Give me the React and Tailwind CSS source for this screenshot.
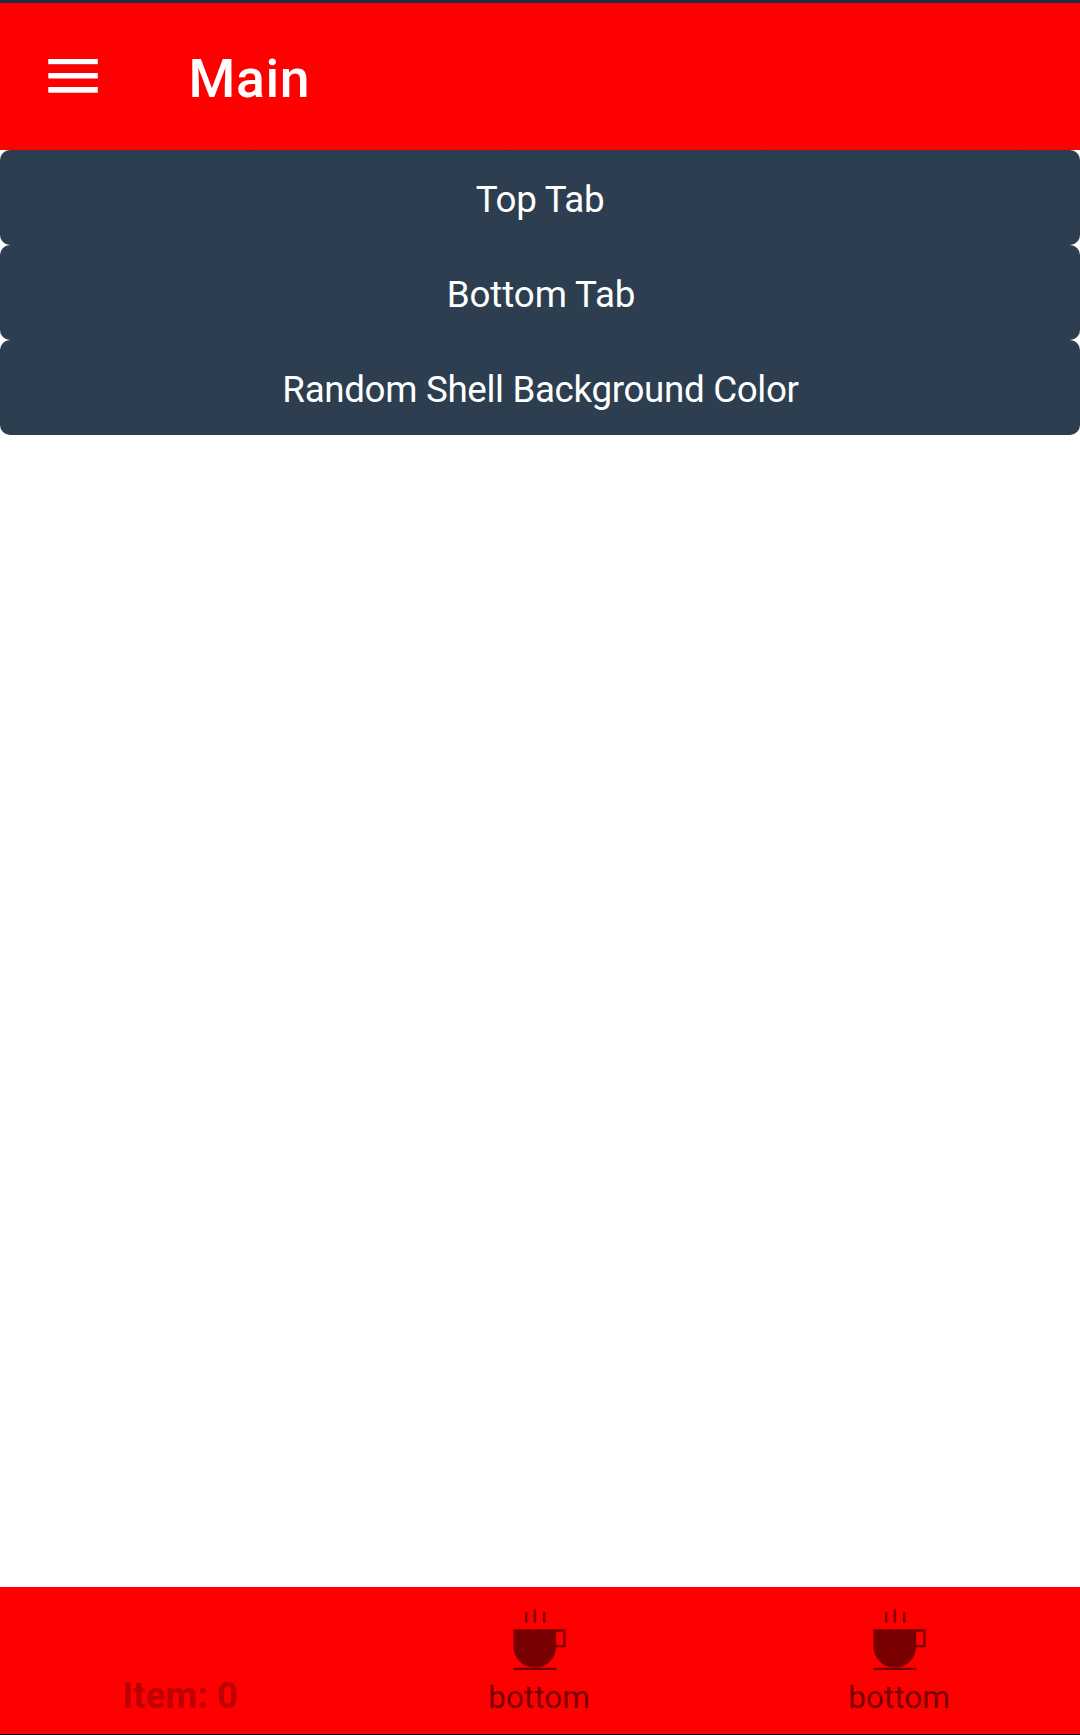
const buttons = [
  { label: "Top Tab", style: "tracking-[-0.3px]" },
  { label: "Bottom Tab", style: "pl-[2px] tracking-[-0.1px]" },
  { label: "Random Shell Background Color", style: "pl-px tracking-[-0.34px]" },
];

function MenuIcon() {
  return (
    <svg className="mb-[2px] block h-[34px] w-[50px]" viewBox="0 0 50 34" fill="#fff">
      <rect x="0.3" y="0" width="49.5" height="5.2" />
      <rect x="0.3" y="14" width="49.5" height="5.5" />
      <rect x="0.3" y="28" width="49.5" height="5.7" />
    </svg>
  );
}

function CupIcon() {
  return (
    <svg className="block h-[62px] w-[54px]" viewBox="0 0 54 62" fill="none" stroke="#780000">
      <path d="M13.2 3.3V13.8M31.2 3.3V13.8M22 0.2V13.8" strokeWidth="2.3" />
      <path d="M0.4 20.3H43.2V36.5C43.2 49 34 58.6 21.8 58.6S0.4 49 0.4 36.5Z" fill="#780000" stroke="none" />
      <path d="M42 21.5H51.4V37.2H42" strokeWidth="2.3" />
      <path d="M0.4 59.8H43.4" strokeWidth="2.3" />
    </svg>
  );
}

function BottomTab() {
  return (
    <div className="flex flex-1 flex-col items-center pt-[22px]">
      <CupIcon />
      <span className="mt-[8px] pr-[2px] text-[31.5px] leading-[37px] text-[#780000]">bottom</span>
    </div>
  );
}

export default function App() {
  return (
    <div className="flex h-[1735px] w-[1080px] flex-col overflow-hidden bg-white font-['Roboto',sans-serif]">
      <div className="h-[3px] shrink-0 bg-[#1f2f47]" />
      <header className="flex h-[147px] shrink-0 items-center bg-[#ff0000] pl-[48px]">
        <MenuIcon />
        <h1 className="mt-[5px] ml-[90.5px] text-[53.5px] leading-[62px] font-medium tracking-[0.7px] text-white">Main</h1>
      </header>
      <main className="flex flex-1 flex-col">
        {buttons.map(({ label, style }) => (
          <button
            key={label}
            className={`flex h-[95px] w-full items-center justify-center rounded-[10px] bg-[#2c3e50] pt-[4px] text-[36.75px] leading-[43px] text-white first:bg-linear-to-b first:from-[#2a3b4c] first:to-[#2c3e50] first:to-15% ${style}`}
          >
            {label}
          </button>
        ))}
      </main>
      <nav className="flex h-[147px] shrink-0 bg-[#ff0000]">
        <div className="flex flex-1 items-end justify-center pb-[17px]">
          <span className="text-[36.75px] leading-[43px] font-bold text-[#bf0000]">Item: 0</span>
        </div>
        <BottomTab />
        <BottomTab />
      </nav>
      <div className="h-px shrink-0 bg-black" />
    </div>
  );
}
